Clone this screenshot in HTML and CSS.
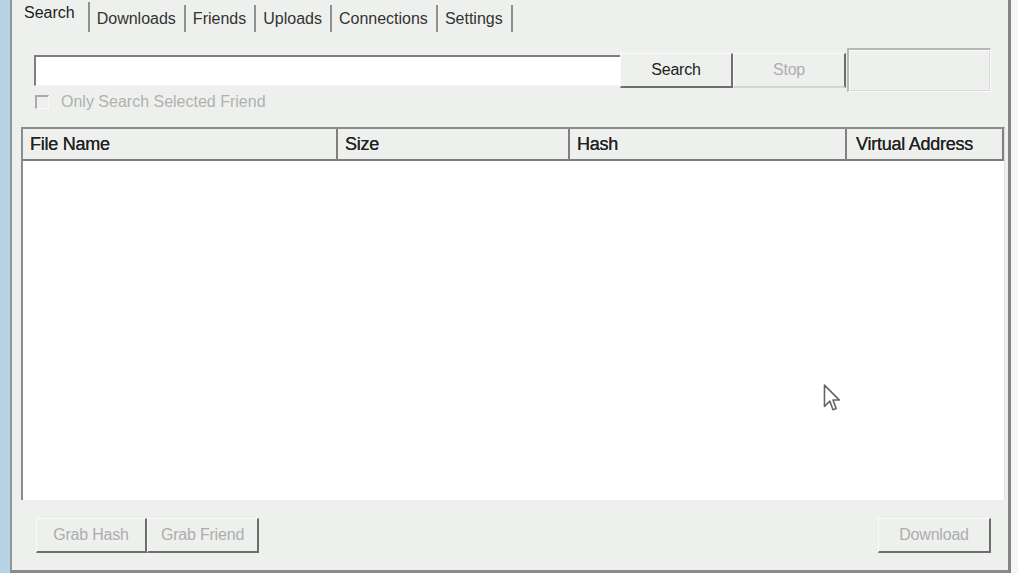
FILE: index.html
```html
<!DOCTYPE html>
<html lang="en">
<head>
  <meta charset="UTF-8" />
  <meta name="viewport" content="width=device-width, initial-scale=1.0" />
  <title>Search</title>
  <link rel="stylesheet" href="styles.css">
</head>
<body>
  <div class="frame-left"></div>

  <div class="window">
    <ul class="tabs">
      <li class="tab active">Search</li>
      <li class="tab">Downloads</li>
      <li class="tab">Friends</li>
      <li class="tab">Uploads</li>
      <li class="tab">Connections</li>
      <li class="tab">Settings</li>
    </ul>

    <div class="search-row">
      <input type="text" class="search-input" />
      <button class="btn">Search</button>
      <button class="btn disabled">Stop</button>
      <div class="status-box"></div>
    </div>

    <label class="check-row">
      <span class="checkbox"></span>
      <span class="check-label">Only Search Selected Friend</span>
    </label>

    <div class="results">
      <div class="results-head">
        <div class="col col-name">File Name</div>
        <div class="col col-size">Size</div>
        <div class="col col-hash">Hash</div>
        <div class="col col-addr">Virtual Address</div>
      </div>
      <div class="results-body">
        <!-- no results yet -->
      </div>
    </div>

    <div class="bottom-bar">
      <div class="btn-group">
        <button class="btn disabled">Grab Hash</button>
        <button class="btn disabled">Grab Friend</button>
      </div>
      <button class="btn disabled">Download</button>
    </div>

    <svg class="cursor" width="22" height="32" viewBox="0 0 20 30">
      <path d="M2 2 L2 22 L7 17 L10 25 L13 24 L10 16 L16 16 Z" fill="#fff" stroke="#666" stroke-width="1.5" stroke-linejoin="round" />
    </svg>
  </div>

  <div class="frame-right"></div>
</body>
</html>
```

FILE: styles.css
```css
body {
  margin: 0;
  padding: 0;
  height: 573px;
  display: flex;
  font-family: 'Liberation Sans', Arial, sans-serif;
  background: #eef0ee;
  overflow: hidden;
}
.frame-left {
  width: 10px;
  background: #b9d3e6;
}
.frame-right {
  width: 7px;
  background: #f4f5f4;
}
.window {
  position: relative;
  flex: 1;
  display: flex;
  flex-direction: column;
  background: #eef0ee;
  border-left: 2px solid #8f9599;
  border-right: 3px solid #858585;
  border-bottom: 3px solid #8a8a8a;
}
.tabs {
  display: flex;
  list-style: none;
  margin: 0;
  padding: 5px 0 0 11px;
  height: 29px;
}
.tab {
  padding: 0 8px 0 7px;
  height: 27px;
  line-height: 27px;
  font-size: 16px;
  color: #333;
  border-right: 2px solid #909090;
}
.tab.active {
  padding: 0 13px 0 1px;
  line-height: 22px;
  margin-top: -3px;
  height: 30px;
  color: #222;
}
.search-row {
  display: flex;
  align-items: center;
  margin-top: 14px;
  height: 44px;
  padding-left: 22px;
}
.search-input {
  box-sizing: border-box;
  width: 586px;
  height: 31px;
  margin: 0;
  background: #fff;
  border: none;
  border-top: 2px solid #7e7e7e;
  border-left: 2px solid #7e7e7e;
  border-bottom: 1px solid #f4f4f4;
  outline: none;
}
.btn {
  box-sizing: border-box;
  width: 113px;
  height: 35px;
  padding: 0;
  background: #eef0ee;
  border: none;
  border-top: 1px solid #fafafa;
  border-left: 1px solid #fafafa;
  border-right: 2px solid #6e6e6e;
  border-bottom: 2px solid #6e6e6e;
  font-family: 'Liberation Sans', Arial, sans-serif;
  font-size: 16px;
  letter-spacing: -0.2px;
  color: #222;
}
.search-row .btn + .btn {
  border-bottom-color: #d4d6d4;
}
.btn.disabled {
  color: #adadad;
}
.status-box {
  box-sizing: border-box;
  width: 144px;
  height: 44px;
  margin-left: 1px;
  border-top: 2px solid #b6b8b6;
  border-left: 2px solid #b6b8b6;
  border-right: 1px solid #fafafa;
  border-bottom: 1px solid #fafafa;
  box-shadow: inset 1px 1px 0 #fafafa, inset -1px -1px 0 #d8dad8;
}
.check-row {
  display: flex;
  align-items: center;
  margin-top: 2px;
  height: 16px;
  padding-left: 23px;
}
.checkbox {
  box-sizing: border-box;
  width: 14px;
  height: 14px;
  border-top: 2px solid #a9a9a9;
  border-left: 2px solid #a9a9a9;
  border-right: 1px solid #f8f8f8;
  border-bottom: 1px solid #f8f8f8;
}
.check-label {
  margin-left: 12px;
  font-size: 16px;
  color: #b0b0b0;
}
.results {
  box-sizing: border-box;
  margin: 17px 3px 0 9px;
  height: 373px;
  display: flex;
  flex-direction: column;
  background: #fff;
  border-top: 2px solid #8c8c8c;
  border-left: 2px solid #8c8c8c;
  border-right: 1px solid #e0e0e0;
}
.results-head {
  display: flex;
  height: 30px;
  background: #eef0ee;
  border-bottom: 2px solid #7c7c7c;
}
.col {
  box-sizing: border-box;
  padding-left: 7px;
  line-height: 30px;
  font-size: 18px;
  letter-spacing: -0.25px;
  color: #222;
  border-right: 2px solid #808080;
  text-shadow: 0 0 0.4px #222;
}
.col-name {
  width: 315px;
}
.col-size {
  width: 232px;
}
.col-hash {
  width: 277px;
}
.col-addr {
  width: 157px;
  padding-left: 9px;
}
.results-body {
  flex: 1;
}
.bottom-bar {
  display: flex;
  justify-content: space-between;
  padding: 18px 17px 0 24px;
}
.btn-group {
  display: flex;
}
.btn-group .btn:first-child {
  width: 111px;
}
.btn-group .btn + .btn {
  width: 112px;
}
.cursor {
  position: absolute;
  left: 810px;
  top: 383px;
}
```
